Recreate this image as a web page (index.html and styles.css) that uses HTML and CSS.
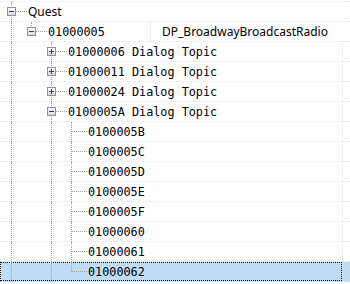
FILE: index.html
```html
<!DOCTYPE html>
<html lang="en">
<head>
    <meta charset="UTF-8">
    <title>Quest tree</title>
    <link rel="stylesheet" href="styles.css">
</head>
<body>

    <!-- Tree list -->
    <div class="tree">
        <div class="row">
            <div class="main">
                <span class="cell tee"><span class="exp minus"></span></span>
                <span class="label sans">Quest</span>
            </div>
        </div>
        <div class="row">
            <div class="main">
                <span class="cell pipe"></span>
                <span class="cell elbow"><span class="exp minus"></span></span>
                <span class="label mono">01000005</span>
                <span class="sub sans">DP_BroadwayBroadcastRadio</span>
            </div>
        </div>
        <div class="row cols">
            <div class="main">
                <span class="cell pipe"></span>
                <span class="cell"></span>
                <span class="cell tee"><span class="exp plus"></span></span>
                <span class="label mono">01000006 Dialog Topic</span>
            </div>
            <div class="rest"></div>
        </div>
        <div class="row cols">
            <div class="main">
                <span class="cell pipe"></span>
                <span class="cell"></span>
                <span class="cell tee"><span class="exp plus"></span></span>
                <span class="label mono">01000011 Dialog Topic</span>
            </div>
            <div class="rest"></div>
        </div>
        <div class="row cols">
            <div class="main">
                <span class="cell pipe"></span>
                <span class="cell"></span>
                <span class="cell tee"><span class="exp plus"></span></span>
                <span class="label mono">01000024 Dialog Topic</span>
            </div>
            <div class="rest"></div>
        </div>
        <div class="row cols">
            <div class="main">
                <span class="cell pipe"></span>
                <span class="cell"></span>
                <span class="cell tee"><span class="exp minus"></span></span>
                <span class="label mono">0100005A Dialog Topic</span>
            </div>
            <div class="rest"></div>
        </div>
        <div class="row cols">
            <div class="main">
                <span class="cell pipe"></span>
                <span class="cell"></span>
                <span class="cell pipe"></span>
                <span class="cell tee"></span>
                <span class="label mono">0100005B</span>
            </div>
            <div class="rest"></div>
        </div>
        <div class="row cols">
            <div class="main">
                <span class="cell pipe"></span>
                <span class="cell"></span>
                <span class="cell pipe"></span>
                <span class="cell tee"></span>
                <span class="label mono">0100005C</span>
            </div>
            <div class="rest"></div>
        </div>
        <div class="row cols">
            <div class="main">
                <span class="cell pipe"></span>
                <span class="cell"></span>
                <span class="cell pipe"></span>
                <span class="cell tee"></span>
                <span class="label mono">0100005D</span>
            </div>
            <div class="rest"></div>
        </div>
        <div class="row cols">
            <div class="main">
                <span class="cell pipe"></span>
                <span class="cell"></span>
                <span class="cell pipe"></span>
                <span class="cell tee"></span>
                <span class="label mono">0100005E</span>
            </div>
            <div class="rest"></div>
        </div>
        <div class="row cols">
            <div class="main">
                <span class="cell pipe"></span>
                <span class="cell"></span>
                <span class="cell pipe"></span>
                <span class="cell tee"></span>
                <span class="label mono">0100005F</span>
            </div>
            <div class="rest"></div>
        </div>
        <div class="row cols">
            <div class="main">
                <span class="cell pipe"></span>
                <span class="cell"></span>
                <span class="cell pipe"></span>
                <span class="cell tee"></span>
                <span class="label mono">01000060</span>
            </div>
            <div class="rest"></div>
        </div>
        <div class="row cols">
            <div class="main">
                <span class="cell pipe"></span>
                <span class="cell"></span>
                <span class="cell pipe"></span>
                <span class="cell tee"></span>
                <span class="label mono">01000061</span>
            </div>
            <div class="rest"></div>
        </div>
        <div class="row cols selected">
            <div class="main">
                <span class="cell pipe"></span>
                <span class="cell"></span>
                <span class="cell pipe"></span>
                <span class="cell elbow"></span>
                <span class="label mono">01000062</span>
            </div>
            <div class="rest"></div>
        </div>
    </div>

</body>
</html>
```

FILE: styles.css
```css
/* Page */
body {
    margin: 0;
    background: #ffffff;
    color: #000000;
    overflow: hidden;
}

/* Tree list */
.tree {
    margin-top: 1px;
    border-top: 1px dotted #e2e2e2;
}

.row {
    display: flex;
    height: 20px;
    box-sizing: border-box;
    border-bottom: 1px dotted #e2e2e2;
}

.main {
    display: flex;
    align-items: center;
    flex: none;
    width: 342px;
    height: 100%;
    padding-left: 1px;
    box-sizing: border-box;
}

.rest {
    flex: 1;
}

.cols .rest {
    border-left: 1px dotted #e2e2e2;
}

.selected {
    background-color: #bfdcf4;
}

.selected .main {
    outline: 1px dotted #000000;
    outline-offset: -1px;
}

/* Tree connectors */
.cell {
    position: relative;
    flex: none;
    width: 20px;
    height: 100%;
}

.pipe::before,
.tee::before,
.elbow::before {
    content: "";
    position: absolute;
    left: 10px;
    top: 0;
    bottom: -1px;
    border-left: 1px dotted #a0a0a0;
}

.elbow::before {
    bottom: auto;
    height: 10px;
}

.tee::after,
.elbow::after {
    content: "";
    position: absolute;
    left: 11px;
    top: 9px;
    width: 15px;
    border-top: 1px dotted #a0a0a0;
}

/* Expander boxes */
.exp {
    position: absolute;
    left: 6px;
    top: 5px;
    width: 9px;
    height: 9px;
    box-sizing: border-box;
    border: 1px solid #919191;
    background: linear-gradient(#ffffff, #d9d9d9);
    z-index: 1;
}

.exp::before {
    content: "";
    position: absolute;
    left: 1px;
    top: 3px;
    width: 5px;
    height: 1px;
    background-color: #24417c;
}

.plus::after {
    content: "";
    position: absolute;
    left: 3px;
    top: 1px;
    width: 1px;
    height: 5px;
    background-color: #24417c;
}

/* Labels */
.label {
    flex: 1;
    padding-left: 7px;
    white-space: nowrap;
}

.sans {
    font-family: "Noto Sans", sans-serif;
    font-size: 12px;
}

.mono {
    font-family: "DejaVu Sans Mono", monospace;
    font-size: 11.8px;
}

.sub {
    display: flex;
    align-items: center;
    flex: none;
    width: 192px;
    height: 100%;
    box-sizing: border-box;
    padding-left: 11px;
    border-left: 1px dotted #e2e2e2;
    white-space: nowrap;
}
```
